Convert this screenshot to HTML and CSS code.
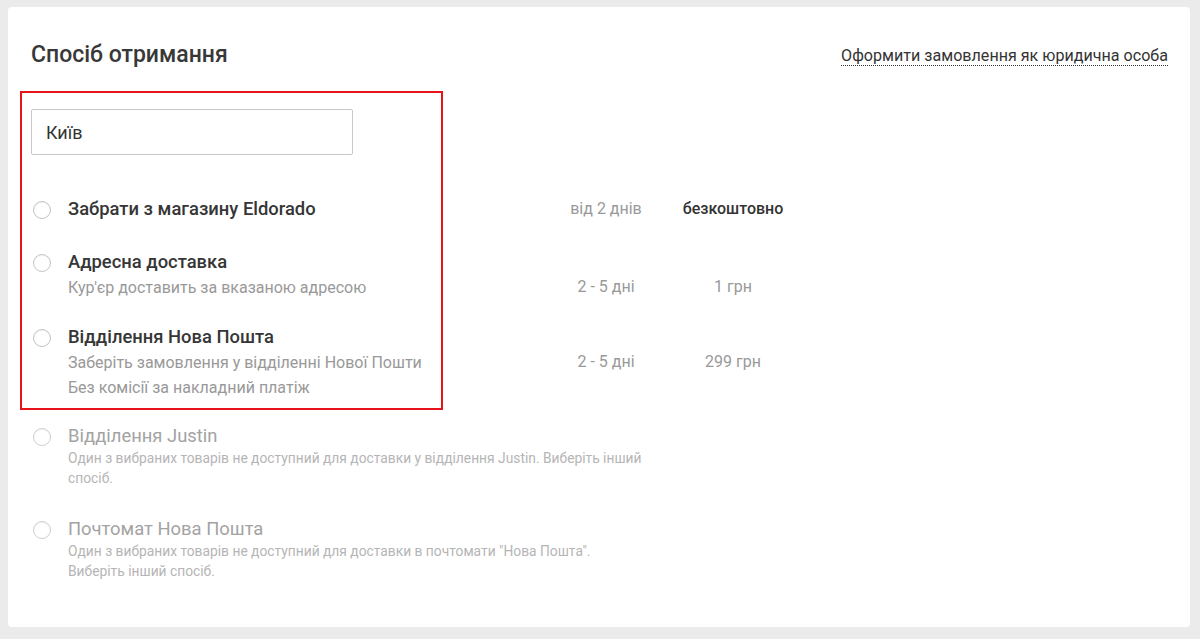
FILE: index.html
```html
<!DOCTYPE html>
<html>

<head>
    <title>Спосіб отримання</title>
    <link rel="stylesheet" href="styles.css">
</head>

<body>
    <div class="card">
        <div class="card-head">
            <h2 class="title">Спосіб отримання</h2>
            <a class="legal-link" href="#">Оформити замовлення як юридична особа</a>
        </div>

        <input type="text" class="city" value="Київ">

        <div class="options">
            <label class="option option-first">
                <span class="radio"></span>
                <span class="info">
                    <span class="name">Забрати з магазину Eldorado</span>
                </span>
                <span class="term">від 2 днів</span>
                <span class="price price-free">безкоштовно</span>
            </label>

            <label class="option">
                <span class="radio"></span>
                <span class="info">
                    <span class="name">Адресна доставка</span>
                    <span class="note">Кур'єр доставить за вказаною адресою</span>
                </span>
                <span class="term term-low">2 - 5 дні</span>
                <span class="price term-low">1 грн</span>
            </label>

            <label class="option">
                <span class="radio"></span>
                <span class="info">
                    <span class="name">Відділення Нова Пошта</span>
                    <span class="note">Заберіть замовлення у відділенні Нової Пошти</span>
                    <span class="note">Без комісії за накладний платіж</span>
                </span>
                <span class="term term-low">2 - 5 дні</span>
                <span class="price term-low">299 грн</span>
            </label>

            <label class="option option-off">
                <span class="radio"></span>
                <span class="info info-wide">
                    <span class="name">Відділення Justin</span>
                    <span class="warn">Один з вибраних товарів не доступний для доставки у відділення Justin. Виберіть інший спосіб.</span>
                </span>
            </label>

            <label class="option option-off">
                <span class="radio"></span>
                <span class="info info-wide">
                    <span class="name">Почтомат Нова Пошта</span>
                    <span class="warn">Один з вибраних товарів не доступний для доставки в почтомати "Нова Пошта". Виберіть інший спосіб.</span>
                </span>
            </label>
        </div>

        <div class="highlight"></div>
    </div>
</body>

</html>
```

FILE: styles.css
```css
body {
    margin: 0;
    padding: 7px 10px 12px 8px;
    background: #ebebeb;
    font-family: Roboto, "Noto Sans", Arial, sans-serif;
    color: #333;
}

.card {
    position: relative;
    background: #fff;
    border-radius: 4px;
    padding: 33px 22px 33px 23px;
    height: 554px;
}

.card-head {
    display: flex;
    justify-content: space-between;
    align-items: center;
}

.title {
    margin: 0;
    font-size: 23px;
    font-weight: 500;
    line-height: 30px;
    color: #383838;
}

.legal-link {
    font-size: 16.1px;
    color: #333;
    text-decoration: none;
    border-bottom: 1px dotted #333;
    line-height: 18px;
    margin-top: 2px;
}

.city {
    display: block;
    box-sizing: border-box;
    width: 322px;
    height: 46px;
    margin-top: 39px;
    padding: 0 14px;
    border: 1px solid #c8c8c8;
    border-radius: 2px;
    font-family: inherit;
    font-size: 18px;
    color: #333;
    outline: none;
}

.options {
    margin-top: 41px;
}

.option {
    display: flex;
    align-items: flex-start;
    margin-bottom: 24px;
    cursor: pointer;
}

.option-first {
    margin-bottom: 27px;
}

.option-off {
    margin-bottom: 29px;
}

.option-off:first-of-type {
    margin-top: 1px;
}

.radio {
    flex: none;
    box-sizing: border-box;
    width: 18px;
    height: 18px;
    margin: 5px 17px 0 2px;
    border: 1px solid #c4c4c4;
    border-radius: 50%;
    box-shadow: inset 0 1px 1px rgba(0, 0, 0, 0.06);
}

.info {
    display: flex;
    flex-direction: column;
    width: 483px;
}

.info-wide {
    width: 577px;
}

.name {
    font-size: 18.4px;
    font-weight: 500;
    line-height: 26px;
    color: #363636;
}

.note {
    font-size: 16px;
    line-height: 25px;
    color: #999;
}

.option-off .name {
    color: #a3a3a3;
    font-weight: 400;
    line-height: 24px;
}

.option-off .radio {
    margin-top: 4px;
    border-color: #cfcfcf;
}

.warn {
    font-size: 13.8px;
    line-height: 20px;
    color: #b5b5b5;
}

.term {
    width: 110px;
    text-align: center;
    font-size: 16px;
    line-height: 26px;
    color: #999;
}

.price {
    width: 144px;
    text-align: center;
    font-size: 16px;
    line-height: 26px;
    color: #999;
}

.price-free {
    font-weight: 500;
    color: #333;
}

.term-low {
    margin-top: 25px;
}

.highlight {
    position: absolute;
    left: 12px;
    top: 84px;
    width: 419px;
    height: 315px;
    border: 2px solid #e8141b;
    pointer-events: none;
}
```
